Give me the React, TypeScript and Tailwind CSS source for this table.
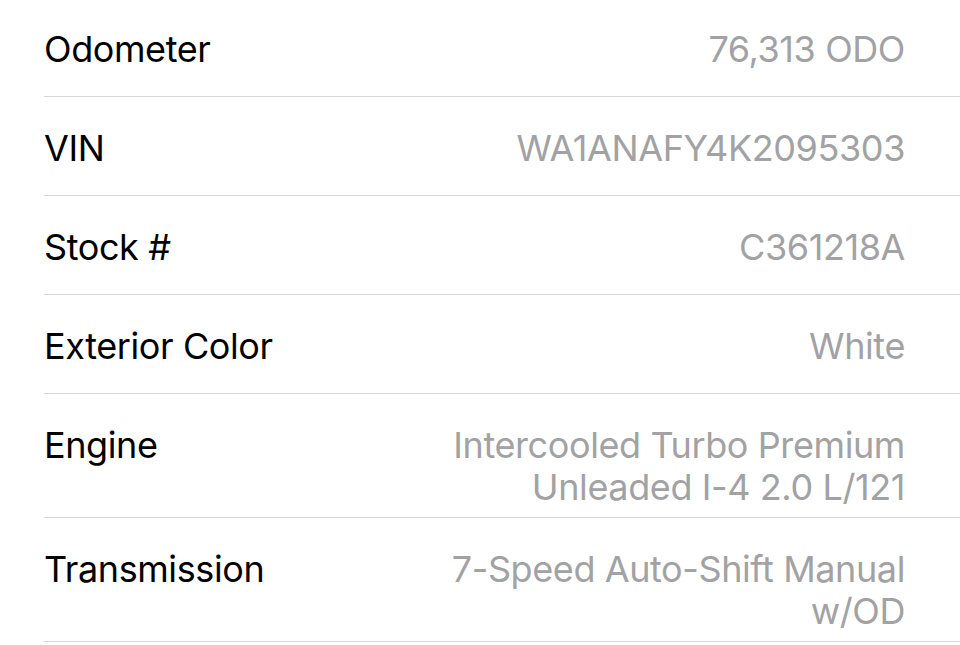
const rows: { label: string; value: string[] }[] = [
  { label: "Odometer", value: ["76,313 ODO"] },
  { label: "VIN", value: ["WA1ANAFY4K2095303"] },
  { label: "Stock #", value: ["C361218A"] },
  { label: "Exterior Color", value: ["White"] },
  { label: "Engine", value: ["Intercooled Turbo Premium", "Unleaded I-4 2.0 L/121"] },
  { label: "Transmission", value: ["7-Speed Auto-Shift Manual", "w/OD"] },
];

export default function App() {
  return (
    <div
      className="w-[960px] h-[645px] overflow-hidden bg-white"
      style={{ fontFamily: "Inter, 'Noto Sans', sans-serif" }}
    >
      <div className="-mt-[2px] pl-[44px]">
        {rows.map((row) => (
          <div
            key={row.label}
            className="flex items-start justify-between min-h-[99px] pt-[30px] pb-[9px] pr-[55px] border-b border-[#d6d6d8] text-[36px] leading-[42px] tracking-[-0.4px]"
          >
            <span className="text-black">{row.label}</span>
            <div className="text-right text-[#a2a2a4]">
              {row.value.map((line) => (
                <div key={line}>{line}</div>
              ))}
            </div>
          </div>
        ))}
      </div>
    </div>
  );
}
